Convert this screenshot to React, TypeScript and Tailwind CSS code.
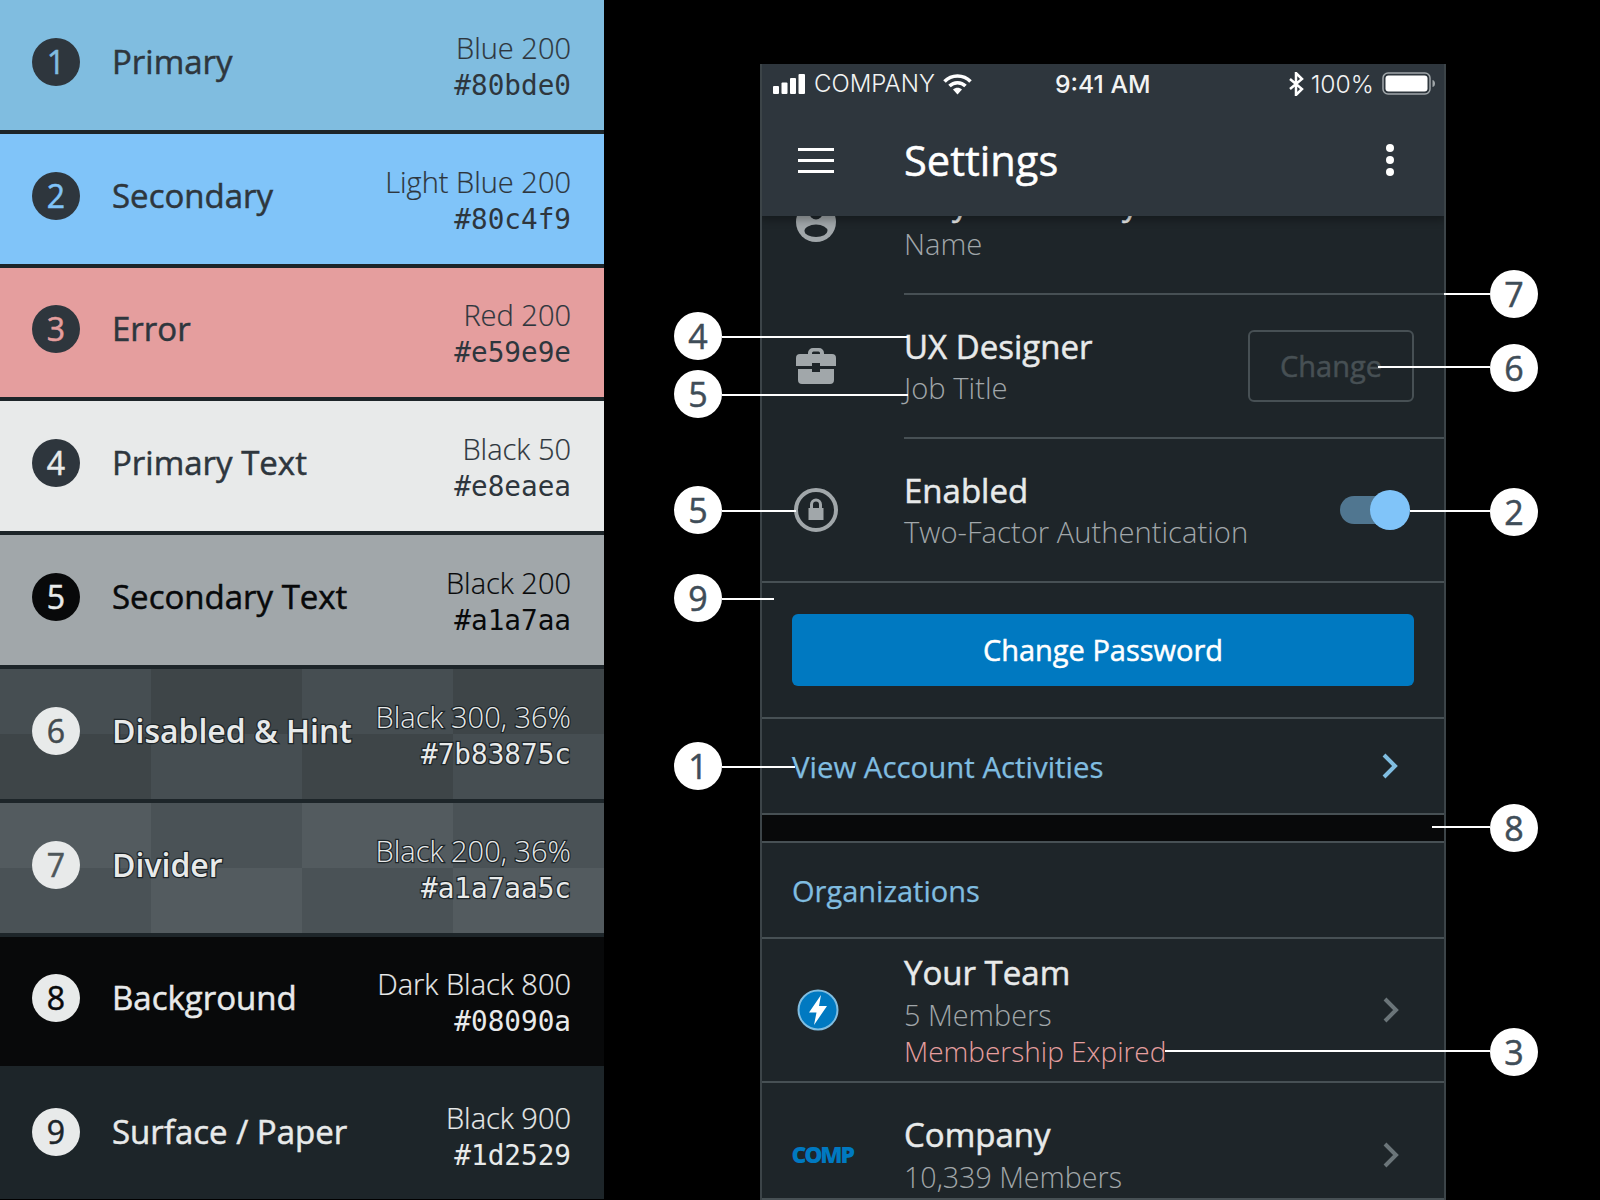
import React from "react";

const O = "font-['Open_Sans',sans-serif]";
const MED = "font-normal [-webkit-text-stroke:0.5px]";

type Sw = {
  n: string; label: string; a: string; b: string;
  row: string; circle: string; num: string; text: string; checker?: [string, string]; outline?: boolean;
};

const swatches: Sw[] = [
  { n: "1", label: "Primary", a: "Blue 200", b: "#80bde0", row: "bg-[#80bde0]", circle: "bg-[#2e363d]", num: "text-[#80bde0]", text: "text-[#2e363d]" },
  { n: "2", label: "Secondary", a: "Light Blue 200", b: "#80c4f9", row: "bg-[#80c4f9]", circle: "bg-[#2e363d]", num: "text-[#80c4f9]", text: "text-[#2e363d]" },
  { n: "3", label: "Error", a: "Red 200", b: "#e59e9e", row: "bg-[#e59e9e]", circle: "bg-[#2e363d]", num: "text-[#e59e9e]", text: "text-[#2e363d]" },
  { n: "4", label: "Primary Text", a: "Black 50", b: "#e8eaea", row: "bg-[#e8eaea]", circle: "bg-[#2e363d]", num: "text-[#e8eaea]", text: "text-[#2e363d]" },
  { n: "5", label: "Secondary Text", a: "Black 200", b: "#a1a7aa", row: "bg-[#a1a7aa]", circle: "bg-[#08090a]", num: "text-[#e8eaea]", text: "text-[#08090a]" },
  { n: "6", label: "Disabled & Hint", a: "Black 300, 36%", b: "#7b83875c", row: "bg-[#1d2529]", circle: "bg-[#e8eaea]", num: "text-[#434b4f]", text: "text-[#e8eaea]", checker: ["bg-[#464e52]", "bg-[#3e4548]"], outline: true },
  { n: "7", label: "Divider", a: "Black 200, 36%", b: "#a1a7aa5c", row: "bg-[#1d2529]", circle: "bg-[#e8eaea]", num: "text-[#4e565a]", text: "text-[#e8eaea]", checker: ["bg-[#535b5f]", "bg-[#4a5256]"], outline: true },
  { n: "8", label: "Background", a: "Dark Black 800", b: "#08090a", row: "bg-[#08090a]", circle: "bg-[#e8eaea]", num: "text-[#08090a]", text: "text-[#e8eaea]" },
  { n: "9", label: "Surface / Paper", a: "Black 900", b: "#1d2529", row: "bg-[#1d2529]", circle: "bg-[#e8eaea]", num: "text-[#1d2529]", text: "text-[#e8eaea]" },
];

const outline = "[-webkit-text-stroke:2.5px_#1d2529] [paint-order:stroke_fill]";

function Swatch({ s, last }: { s: Sw; last: boolean }) {
  return (
    <div className={`relative ${last ? "h-[129px]" : "h-[133.8px] border-b-4 border-[#1d2529]"} ${s.row} overflow-hidden flex items-center pb-[6px]`}>
      {s.checker && (
        <div className="absolute inset-0 grid grid-cols-4 grid-rows-2">
          {[0, 1, 0, 1, 1, 0, 1, 0].map((c, i) => (
            <div key={i} className={s.checker![c]} />
          ))}
        </div>
      )}
      <div className={`relative ml-[32px] w-[48px] h-[48px] rounded-full flex items-center justify-center text-[32px] leading-none ${MED} ${s.circle} ${s.num}`}>
        {s.n}
      </div>
      <div className={`relative ml-[32px] leading-[44px] whitespace-nowrap ${s.text} ${s.outline ? `text-[32px] font-semibold ${outline}` : `text-[33px] ${MED}`}`}>
        {s.label}
      </div>
      <div className={`relative ml-auto mr-[33px] pt-[10px] text-right whitespace-nowrap ${s.text} ${s.outline ? outline : ""}`}>
        <div className={`text-[29px] leading-[36px] font-light ${s.outline ? "" : "[-webkit-text-stroke:0.2px]"}`}>{s.a}</div>
        <div className="mt-[2px] font-['DejaVu_Sans_Mono',monospace] text-[27.7px] leading-[36px] font-normal">{s.b}</div>
      </div>
    </div>
  );
}

function Chevron({ color }: { color: string }) {
  return (
    <svg width="18" height="26" viewBox="0 0 18 26" fill="none" className="block">
      <path d="M3 2l11 11L3 24" stroke={color} strokeWidth="4" />
    </svg>
  );
}

function Item({ h, icon, title, sub, subSize = "text-[29.2px]", extra, right }: {
  h: string; icon?: React.ReactNode; title: string; sub: string; subSize?: string; extra?: string; right?: React.ReactNode;
}) {
  return (
    <div className={`${h} relative flex items-center shrink-0`}>
      <div className="w-[108px] mr-[34px] flex justify-center shrink-0">{icon}</div>
      <div className="flex-1 pt-[2px]">
        <div className={`text-[33px] leading-[42px] ${MED} text-[#e8eaea] whitespace-nowrap`}>{title}</div>
        <div className={`${subSize} leading-[41px] font-light text-[#a1a7aa] whitespace-nowrap`}>{sub}</div>
        {extra && <div className="-mt-[2px] mb-[2px] text-[28px] leading-[36px] font-light text-[#e59e9e] whitespace-nowrap">{extra}</div>}
      </div>
      {right}
    </div>
  );
}

const Divider = ({ inset }: { inset?: boolean }) => (
  <div className={`h-[2px] shrink-0 bg-[#475054] ${inset ? "ml-[142px]" : ""}`} />
);

function Callout({ n, cx, cy }: { n: string; cx: string; cy: string }) {
  return (
    <div className={`absolute ${cx} ${cy} w-[48px] h-[48px] rounded-full bg-white text-[#3f4d58] text-[34px] ${MED} leading-none flex items-center justify-center`}>
      {n}
    </div>
  );
}

const Line = ({ c }: { c: string }) => <div className={`absolute h-[2px] bg-white ${c}`} />;

export default function App() {
  return (
    <div className={`relative w-[1600px] h-[1200px] bg-black overflow-hidden flex ${O}`}>
      <div className="w-[604px] shrink-0 flex flex-col">
        {swatches.map((s, i) => (
          <Swatch key={s.n} s={s} last={i === swatches.length - 1} />
        ))}
      </div>

      <div className="ml-[156px] mt-[64px] w-[686px] h-[1136px] flex flex-col bg-[#1e2529] border-x-2 border-[#3c4448] overflow-hidden">
        {/* app bar */}
        <div className="relative z-10 h-[152px] shrink-0 bg-[#2e363d] -mx-[2px] shadow-[0_4px_8px_rgba(0,0,0,0.3)] flex flex-col">
          <div className="h-[40px] flex items-center relative text-[#f2f3f3] text-[24px] font-['Inter',sans-serif] font-light pl-[13px] pr-[10px]">
            <svg width="33" height="20" viewBox="0 0 33 20" className="block" fill="#fff">
              <rect x="0" y="12" width="6" height="8" rx="1" />
              <rect x="8.5" y="8.5" width="6" height="11.5" rx="1" />
              <rect x="17" y="4" width="6" height="16" rx="1" />
              <rect x="25.5" y="0" width="6.5" height="20" rx="1" />
            </svg>
            <span className="ml-[8px] leading-none">COMPANY</span>
            <svg width="29" height="22" viewBox="0 0 29 22" className="ml-[8px] block" fill="none" stroke="#fff" strokeWidth="3.5">
              <path d="M1.5 8.500C8.500 1 20.500 1 27.500 8.500" />
              <path d="M6.500 13c4.500-4.500 11.500-4.500 16 0" />
              <path d="M14.500 21.500l-4.500-5c2.500-2.200 6.500-2.200 9 0z" fill="#fff" stroke="none" />
            </svg>
            <span className="absolute left-[295px] leading-none font-medium text-[24.7px]">9:41 AM</span>
            <div className="ml-auto flex items-center">
              <svg width="16" height="24" viewBox="0 0 16 24" fill="none" stroke="#fff" strokeWidth="2.5" className="block">
                <path d="M2 7l12 10-6 6V1l6 6L2 17" />
              </svg>
              <span className="ml-[7px] leading-none text-[24.7px]">100%</span>
              <svg width="54" height="24" viewBox="0 0 54 24" className="ml-[8px] block">
                <rect x="1" y="1" width="47" height="21" rx="5" fill="none" stroke="#a1a7aa" strokeWidth="1.5" />
                <rect x="3.5" y="3.5" width="42" height="16" rx="3" fill="#fff" />
                <path d="M50.500 8c2 .5 2.500 2 2.500 3.500s-.5 3-2.500 3.500z" fill="#a1a7aa" />
              </svg>
            </div>
          </div>
          <div className="flex-1 flex items-center relative">
            <div className="ml-[38px] w-[36px] flex flex-col gap-[8px]">
              <div className="h-[3px] bg-white" />
              <div className="h-[3px] bg-white" />
              <div className="h-[3px] bg-white" />
            </div>
            <div className={`ml-[70px] pt-[2px] text-[41.6px] leading-none ${MED} text-white`}>Settings</div>
            <div className="ml-auto mr-[52px] flex flex-col gap-[4px]">
              <div className="w-[8px] h-[8px] rounded-full bg-white" />
              <div className="w-[8px] h-[8px] rounded-full bg-white" />
              <div className="w-[8px] h-[8px] rounded-full bg-white" />
            </div>
          </div>
        </div>

        {/* clipped name row */}
        <div className="h-[77px] shrink-0 relative overflow-hidden">
          <div className="absolute left-0 bottom-0 right-0 flex items-end h-[140px]">
            <div className="w-[108px] mr-[34px] shrink-0 flex justify-center pb-[51px]">
              <svg width="40" height="40" viewBox="0 0 40 40" className="block">
                <circle cx="20" cy="20" r="20" fill="#a1a7aa" />
                <circle cx="20" cy="11" r="6.500" fill="#1e2529" />
                <ellipse cx="20" cy="28.800" rx="11.500" ry="6.200" fill="#1e2529" />
              </svg>
            </div>
            <div className="pb-[29px]">
              <div className={`text-[33px] leading-[42px] ${MED} text-[#e8eaea] whitespace-nowrap`}>May Sandersby</div>
              <div className="text-[29.2px] leading-[40px] font-light text-[#a1a7aa] whitespace-nowrap">Name</div>
            </div>
          </div>
        </div>
        <Divider inset />

        <Item
          h="h-[142px]"
          title="UX Designer"
          sub="Job Title"
          icon={
            <svg width="40" height="36" viewBox="0 0 40 36" className="block" fill="#a1a7aa">
              <path d="M12 6V5a5 5 0 0 1 5-5h6a5 5 0 0 1 5 5v1h8a4 4 0 0 1 4 4v8H24v-3h-8v3H0v-8a4 4 0 0 1 4-4zm4 0h8V5a1.500 1.500 0 0 0-1.500-1.500h-5A1.500 1.500 0 0 0 16 5z" />
              <path d="M2 21h14v3h8v-3h14v11a4 4 0 0 1-4 4H6a4 4 0 0 1-4-4z" />
            </svg>
          }
          right={
            <div className={`w-[166px] h-[72px] mr-[30px] rounded-[6px] border-2 border-[#475054] flex items-center justify-center text-[29px] ${MED} text-[#475054]`}>
              Change
            </div>
          }
        />
        <Divider inset />

        <Item
          h="h-[142px]"
          title="Enabled"
          sub="Two-Factor Authentication"
          icon={
            <svg width="44" height="44" viewBox="0 0 44 44" className="block">
              <circle cx="22" cy="22" r="20" fill="none" stroke="#a1a7aa" strokeWidth="4" />
              <path d="M16 20v-3.500a6 6 0 0 1 12 0V20h1.500v12h-15V20zm3 0h6v-3.500a3 3 0 0 0-6 0z" fill="#a1a7aa" />
            </svg>
          }
          right={
            <div className="relative w-[70px] h-[40px] mr-[34px] flex items-center">
              <div className="absolute left-0 w-[55px] h-[28px] rounded-full bg-[#507690]" />
              <div className="absolute right-0 w-[40px] h-[40px] rounded-full bg-[#80c4f9]" />
            </div>
          }
        />
        <Divider />

        <div className="h-[134px] shrink-0 flex items-center pl-[30px] pr-[30px]">
          <div className={`w-full h-[72px] rounded-[6px] bg-[#0079c1] flex items-center justify-center text-[29px] ${MED} text-white`}>
            Change Password
          </div>
        </div>
        <Divider />

        <div className="h-[94px] shrink-0 flex items-center pl-[30px] pr-[45px] justify-between">
          <span className={`pt-[2px] text-[29.4px] font-normal [-webkit-text-stroke:0.25px] text-[#80bde0]`}>View Account Activities</span>
          <Chevron color="#80bde0" />
        </div>
        <Divider />
        <div className="h-[26px] shrink-0 bg-[#08090a]" />
        <Divider />

        <div className="h-[94px] shrink-0 flex items-center pl-[30px]">
          <span className={`pt-[1px] text-[29px] font-normal [-webkit-text-stroke:0.25px] text-[#80bde0]`}>Organizations</span>
        </div>
        <Divider />

        <Item
          h="h-[142px]"
          title="Your Team"
          sub="5 Members"
          subSize="text-[28.8px]"
          extra="Membership Expired"
          icon={
            <svg width="42" height="42" viewBox="0 0 42 42" className="block ml-[3px]">
              <circle cx="21" cy="21" r="19.500" fill="#0079c1" stroke="#80bde0" strokeWidth="2" />
              <path d="M24 6L12 23.500h7.500L17 36l13-19h-8z" fill="#fff" />
            </svg>
          }
          right={<div className="mr-[44px]"><Chevron color="#6b7579" /></div>}
        />
        <Divider />

        <Item
          h="h-[115px] pt-[28px]"
          title="Company"
          sub="10,339 Members"
          subSize="text-[28.6px]"
          icon={
            <div className="text-[23px] pb-[1px] leading-none font-extrabold tracking-[-2.2px] text-[#0079c1] w-[62px] ml-[13px]">COMP</div>
          }
          right={<div className="mr-[44px]"><Chevron color="#6b7579" /></div>}
        />
        <Divider />
      </div>

      {/* annotation lines */}
      <Line c="left-[722px] top-[336px] w-[186px]" />
      <Line c="left-[722px] top-[394px] w-[186px]" />
      <Line c="left-[722px] top-[510px] w-[74px]" />
      <Line c="left-[722px] top-[598px] w-[52px]" />
      <Line c="left-[722px] top-[766px] w-[73px]" />
      <Line c="left-[1444px] top-[293px] w-[46px]" />
      <Line c="left-[1378px] top-[366px] w-[112px]" />
      <Line c="left-[1410px] top-[510px] w-[80px]" />
      <Line c="left-[1432px] top-[826px] w-[58px]" />
      <Line c="left-[1165px] top-[1050px] w-[325px]" />

      <Callout n="4" cx="left-[674px]" cy="top-[312px]" />
      <Callout n="5" cx="left-[674px]" cy="top-[370px]" />
      <Callout n="5" cx="left-[674px]" cy="top-[486px]" />
      <Callout n="9" cx="left-[674px]" cy="top-[574px]" />
      <Callout n="1" cx="left-[674px]" cy="top-[742px]" />
      <Callout n="7" cx="left-[1490px]" cy="top-[270px]" />
      <Callout n="6" cx="left-[1490px]" cy="top-[344px]" />
      <Callout n="2" cx="left-[1490px]" cy="top-[488px]" />
      <Callout n="8" cx="left-[1490px]" cy="top-[804px]" />
      <Callout n="3" cx="left-[1490px]" cy="top-[1028px]" />
    </div>
  );
}
